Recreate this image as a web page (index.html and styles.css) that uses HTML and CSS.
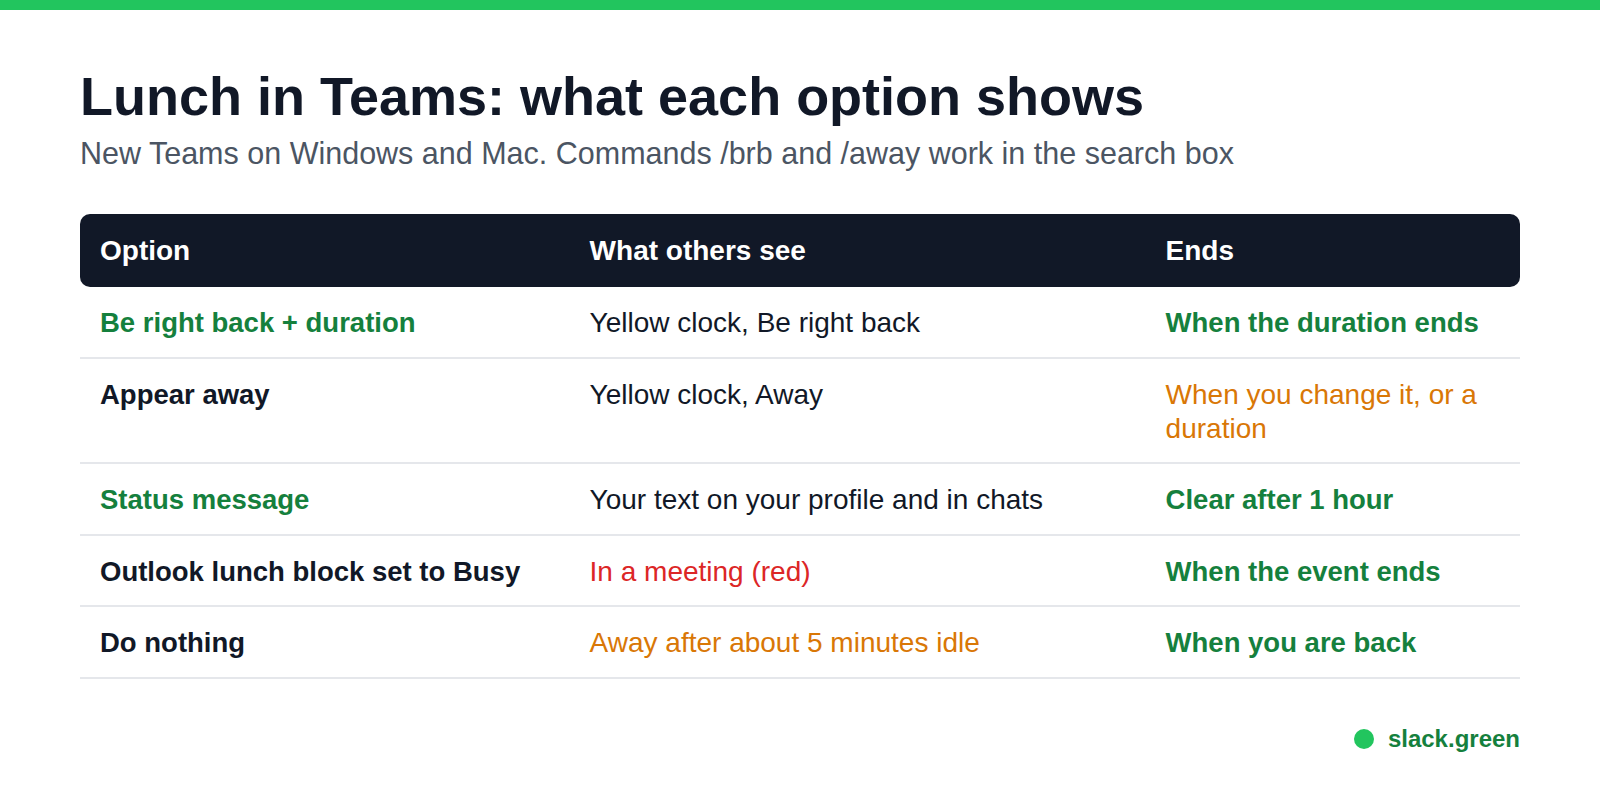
FILE: index.html
```html
<!DOCTYPE html>
<html lang="en">

<head>
  <meta charset="UTF-8">
  <meta name="viewport" content="width=device-width, initial-scale=1.0">
  <title>Lunch in Teams: what each option shows</title>
  <link rel="stylesheet" href="styles.css">
</head>

<body>
  <div class="topbar"></div>
  <div class="page">
    <h1>Lunch in Teams: what each option shows</h1>
    <p class="sub">New Teams on Windows and Mac. Commands /brb and /away work in the search box</p>

    <table class="options">
      <thead>
        <tr>
          <th class="c1">Option</th>
          <th class="c2">What others see</th>
          <th class="c3">Ends</th>
        </tr>
      </thead>
      <tbody>
        <tr>
          <td class="name good">Be right back + duration</td>
          <td>Yellow clock, Be right back</td>
          <td class="name good">When the duration ends</td>
        </tr>
        <tr>
          <td class="name">Appear away</td>
          <td>Yellow clock, Away</td>
          <td class="warn">When you change it, or a duration</td>
        </tr>
        <tr>
          <td class="name good">Status message</td>
          <td>Your text on your profile and in chats</td>
          <td class="name good">Clear after 1 hour</td>
        </tr>
        <tr>
          <td class="name">Outlook lunch block set to Busy</td>
          <td class="bad">In a meeting (red)</td>
          <td class="name good">When the event ends</td>
        </tr>
        <tr>
          <td class="name">Do nothing</td>
          <td class="warn">Away after about 5 minutes idle</td>
          <td class="name good">When you are back</td>
        </tr>
      </tbody>
    </table>

    <div class="footer">
      <span class="dot"></span>
      <span class="brand">slack.green</span>
    </div>
  </div>
</body>

</html>
```

FILE: styles.css
```css
body {
  margin: 0;
  background: #fff;
  font-family: "Liberation Sans", Arial, sans-serif;
  color: #111827;
}

.topbar {
  height: 10px;
  background: #22c55e;
}

.page {
  padding: 54px 80px 0;
}

h1 {
  margin: 0;
  font-size: 54px;
  line-height: 1.2;
  font-weight: 700;
  color: #111827;
}

.sub {
  margin: 5px 0 0;
  font-size: 30.5px;
  line-height: 39px;
  color: #4b5563;
}

.options {
  width: 100%;
  margin-top: 41px;
  border-collapse: separate;
  border-spacing: 0;
  table-layout: fixed;
  font-size: 28px;
  line-height: 33.6px;
}

.options th,
.options td {
  box-sizing: border-box;
}

.options th {
  background: #111827;
  color: #fff;
  text-align: left;
  font-weight: 700;
  padding: 20px 20px 20px;
}

.options th.c1 {
  width: 34%;
  border-radius: 10px 0 0 10px;
}

.options th.c2 {
  width: 40%;
}

.options th.c3 {
  border-radius: 0 10px 10px 0;
}

.options td {
  padding: 19px 20px 17px;
  vertical-align: top;
  border-bottom: 2px solid #e5e7eb;
  color: #111827;
}

.options td.name {
  font-size: 27.5px;
  font-weight: 700;
}

.options td.good {
  color: #15803d;
}

.options td.warn {
  color: #d97706;
}

.options td.bad {
  color: #dc2626;
}

.footer {
  display: flex;
  justify-content: flex-end;
  align-items: center;
  gap: 14px;
  margin-top: 46px;
}

.dot {
  width: 20px;
  height: 20px;
  border-radius: 50%;
  background: #22c55e;
}

.brand {
  font-size: 24px;
  font-weight: 700;
  color: #15803d;
}
```
